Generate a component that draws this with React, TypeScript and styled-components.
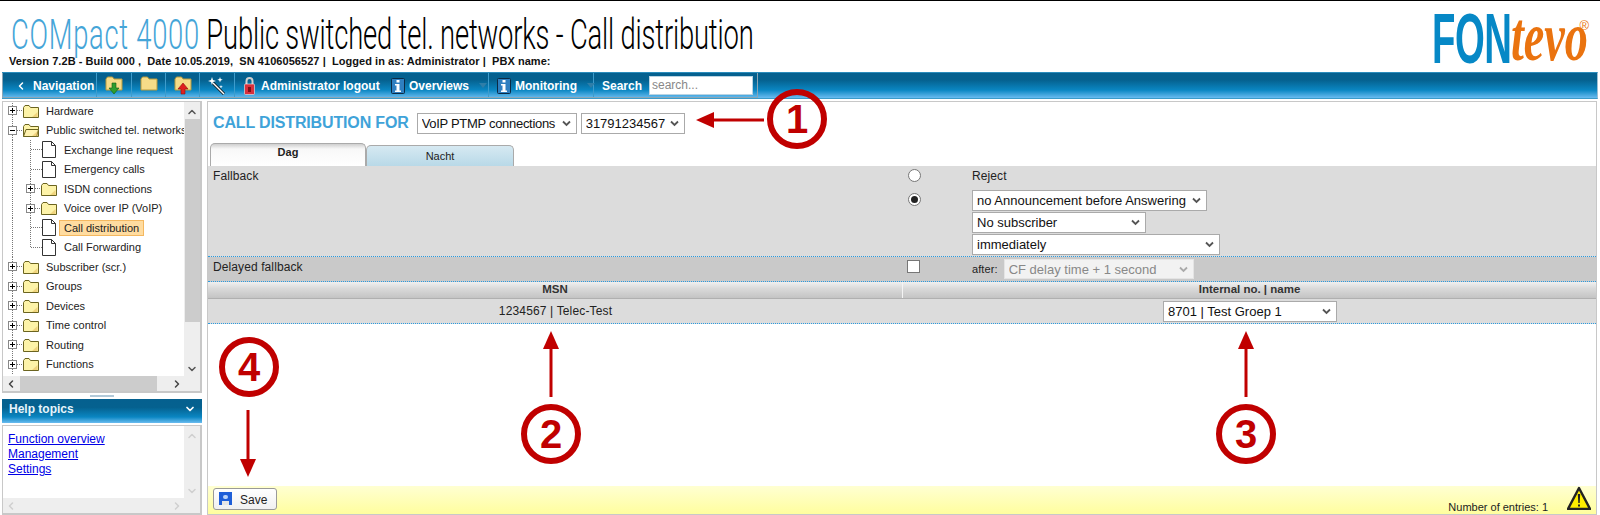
import React from "react";
import styled, { createGlobalStyle } from "styled-components";
import { ChevronUp, ChevronDown, ChevronLeft, ChevronRight } from "lucide-react";

const GlobalStyle = createGlobalStyle`
  html, body {
    margin: 0;
    padding: 0;
    background: #fff;
    font-family: "Liberation Sans", Arial, sans-serif;
  }
`;

const chevron = (color: string) =>
  `url("data:image/svg+xml,%3Csvg xmlns='http://www.w3.org/2000/svg' width='9' height='7'%3E%3Cpath d='M1 1.5l3.5 3.5 3.5-3.5' fill='none' stroke='${color}' stroke-width='1.8'/%3E%3C/svg%3E")`;

const Page = styled.div`
  position: relative;
  width: 1600px;
  height: 515px;
  overflow: hidden;
  border-top: 1px solid #000;
  box-sizing: border-box;
`;

const Header = styled.header`
  display: flex;
  justify-content: space-between;
  height: 71px;
  padding: 0 9px 0 9px;
  box-sizing: border-box;
`;

const TitleBlock = styled.div`
  display: flex;
  flex-direction: column;
`;

const Title = styled.h1`
  margin: 13px 0 0 2px;
  height: 41px;
  font-family: Roboto, "Liberation Sans", sans-serif;
  font-weight: 300;
  font-size: 42px;
  line-height: 41px;
  letter-spacing: -0.26px;
  white-space: pre;
  color: #000;
  transform: scaleX(0.652);
  transform-origin: left center;
`;

const Product = styled.span`
  color: #45a5d8;
  letter-spacing: 1.1px;
`;

const VersionLine = styled.div`
  font-size: 11px;
  line-height: 13px;
  font-weight: bold;
  letter-spacing: 0.05px;
  white-space: pre;
  color: #111;
`;

const Logo = styled.div`
  display: flex;
  position: relative;
  width: 159px;
  height: 60px;
  margin-top: 8px;
`;

const LogoFon = styled.span`
  display: block;
  margin-right: -68px;
  font-size: 71px;
  line-height: 60px;
  font-weight: bold;
  color: #0688c6;
  letter-spacing: -1px;
  transform: scaleX(0.54);
  transform-origin: left center;
`;

const LogoTevo = styled.span`
  display: block;
  margin-right: -36px;
  font-family: "Liberation Serif", serif;
  font-size: 70px;
  line-height: 56px;
  font-style: italic;
  font-weight: bold;
  color: #ea730f;
  transform: scaleX(0.66);
  transform-origin: left center;
`;

const LogoMark = styled.span`
  position: absolute;
  right: 2px;
  top: 10px;
  font-size: 13px;
  line-height: 14px;
  color: #ea730f;
`;

const Toolbar = styled.nav`
  display: flex;
  align-items: stretch;
  height: 27px;
  margin: 0 2px;
  box-sizing: border-box;
  border-top: 1px solid #2a8cbc;
  border-bottom: 1px solid #3b9bca;
  border-right: 1px solid #9cc0d4;
  background: linear-gradient(#05608f 0%, #05618f 28%, #0a86c2 68%, #6abcf0 100%);
`;

const ToolGroup = styled.div`
  display: flex;
  align-items: stretch;
  width: 756px;
  padding-left: 6px;
  box-sizing: border-box;
  border-left: 1px solid #8aa6b6;
  border-right: 1px solid #8aa6b6;
  border-bottom: 1px solid #8aa6b6;
`;

const ToolItem = styled.div<{ $w: number; $pad?: number; $gap?: number; $line?: boolean }>`
  display: flex;
  align-items: center;
  gap: ${(p) => p.$gap ?? 6}px;
  width: ${(p) => p.$w}px;
  padding: 1px 0 0 ${(p) => p.$pad ?? 8}px;
  box-sizing: border-box;
  flex: none;
  color: #fff;
  font-size: 12px;
  font-weight: bold;
  white-space: nowrap;
  border-right: ${(p) => (p.$line ? "1px solid #3d9ccc" : "0")};
  svg {
    flex: none;
  }
`;

const Caret = styled.span`
  width: 0;
  height: 0;
  margin-left: 6px;
  border-left: 4px solid transparent;
  border-right: 4px solid transparent;
  border-top: 5px solid #2f7ea8;
`;

const SearchInput = styled.input`
  align-self: center;
  width: 104px;
  height: 19px;
  padding: 0 2px;
  box-sizing: border-box;
  border: 1px solid #b9d3e2;
  font-family: inherit;
  font-size: 12px;
  &::placeholder {
    color: #888;
  }
`;

const Content = styled.div`
  display: flex;
  gap: 5px;
  height: 414px;
  margin: 2px 3px 0 2px;
`;

const Side = styled.aside`
  display: flex;
  flex-direction: column;
  width: 200px;
  flex: none;
`;

const ScrollPanel = styled.section<{ $h: number }>`
  display: grid;
  grid-template-columns: 1fr 16px;
  grid-template-rows: 1fr 15px;
  height: ${(p) => p.$h}px;
  box-sizing: border-box;
  border: 1px solid #c8c8c8;
  border-right-width: 2px;
  border-bottom-width: 2px;
  background: #fff;
  overflow: hidden;
`;

const VScroll = styled.div<{ $faded?: boolean }>`
  display: flex;
  flex-direction: column;
  align-items: center;
  padding: 4px 0 1px;
  background: #eee;
  color: ${(p) => (p.$faded ? "#cfcfcf" : "#555")};
  svg:last-child {
    margin-top: auto;
  }
`;

const VThumb = styled.div`
  width: 15px;
  height: 203px;
  margin-top: 1px;
  flex: none;
  background: #ccc;
`;

const HScroll = styled.div<{ $faded?: boolean }>`
  grid-column: 1 / 3;
  display: flex;
  align-items: center;
  padding: 0 17px 0 2px;
  background: #eee;
  color: ${(p) => (p.$faded ? "#cfcfcf" : "#444")};
  svg:last-child {
    margin-left: auto;
  }
`;

const HThumb = styled.div`
  width: 137px;
  height: 15px;
  margin-left: 3px;
  background: #ccc;
`;

const TreeBody = styled.div`
  overflow: hidden;
`;

const TreeList = styled.div`
  margin-top: -1px;
`;

const guide = (x: number, half?: boolean) =>
  `repeating-linear-gradient(to bottom, #777 0 1px, transparent 1px 2px) ${x}px 0 / 1px ${half ? "50%" : "100%"} no-repeat`;

const TreeRow = styled.div<{ $level: number; $lastChild?: boolean; $inChild?: boolean }>`
  display: flex;
  align-items: center;
  height: 19.5px;
  padding-left: ${(p) => (p.$level === 0 ? 5 : 23)}px;
  font-size: 11px;
  color: #222;
  white-space: nowrap;
  background: ${(p) =>
    [guide(9), p.$inChild ? guide(27, p.$lastChild) : ""].filter(Boolean).join(", ")};
`;

const Expander = styled.span`
  position: relative;
  flex: none;
  width: 9px;
  height: 9px;
  box-sizing: border-box;
  border: 1px solid #888;
  background: #fff;
  &::before {
    content: "";
    position: absolute;
    left: 1px;
    right: 1px;
    top: 3px;
    height: 1px;
    background: #000;
  }
`;

const ExpanderPlus = styled(Expander)`
  &::after {
    content: "";
    position: absolute;
    top: 1px;
    bottom: 1px;
    left: 3px;
    width: 1px;
    background: #000;
  }
`;

const Dots = styled.span<{ $w: number; $ml?: number }>`
  flex: none;
  width: ${(p) => p.$w}px;
  height: 1px;
  margin-left: ${(p) => p.$ml ?? 0}px;
  background: repeating-linear-gradient(to right, #777 0 1px, transparent 1px 2px);
`;

const NodeLabel = styled.span<{ $selected?: boolean; $gap: number }>`
  margin-left: ${(p) => p.$gap}px;
  padding: ${(p) => (p.$selected ? "1px 4px" : "0")};
  background: ${(p) => (p.$selected ? "#ffdca0" : "transparent")};
  outline: ${(p) => (p.$selected ? "1px solid #f4b860" : "0")};
  position: relative;
  left: ${(p) => (p.$selected ? "-4px" : "0")};
`;

const Splitter = styled.div`
  height: 6px;
  flex: none;
  box-sizing: border-box;
  padding: 2px 88px;
  background: radial-gradient(circle, #b0c8d8 0 0.7px, transparent 1px) 0 0 / 2px 2px;
  background-clip: content-box;
`;

const HelpHeader = styled.div`
  display: flex;
  align-items: center;
  justify-content: space-between;
  height: 24px;
  flex: none;
  padding: 0 6px 4px 7px;
  box-sizing: border-box;
  color: #e6f4fc;
  font-size: 12px;
  font-weight: bold;
  background: linear-gradient(#05608f 0%, #05618f 35%, #0a86c2 75%, #6abcf0 100%);
`;

const HelpLinks = styled.div`
  display: flex;
  flex-direction: column;
  padding: 6px 5px;
  font-size: 12px;
  line-height: 15px;
`;

const HelpLink = styled.a`
  color: #0000e6;
  text-decoration: underline;
`;

const HelpPanel = styled(ScrollPanel)`
  margin-top: 2px;
`;

const Main = styled.main`
  display: flex;
  flex-direction: column;
  width: 1390px;
  flex: none;
  box-sizing: border-box;
  border: 1px solid #c8c8c8;
`;

const TitleRow = styled.div`
  display: flex;
  align-items: center;
  gap: 4px;
  height: 40px;
  padding: 2px 0 0 5px;
  box-sizing: border-box;
`;

const Heading = styled.h2`
  margin: 0 4px 0 0;
  font-size: 16px;
  font-weight: bold;
  letter-spacing: -0.15px;
  color: #3fa3d9;
`;

const Select = styled.select<{ $w: number; $h?: number; $track?: number }>`
  appearance: none;
  width: ${(p) => p.$w}px;
  height: ${(p) => p.$h ?? 21}px;
  padding: 0 0 0 4px;
  box-sizing: border-box;
  border: 1px solid #aaa;
  border-radius: 0;
  font-family: inherit;
  font-size: 13px;
  letter-spacing: ${(p) => p.$track ?? 0}px;
  color: #111;
  background: #fff ${chevron("%23555")} no-repeat right 5px center;
  &:disabled {
    border-color: #e4e4e4;
    color: #888;
    opacity: 1;
    background: #f2f2f2 ${chevron("%23aaa")} no-repeat right 5px center;
  }
`;

const Tabs = styled.div`
  display: flex;
  align-items: flex-end;
  height: 24px;
  padding-left: 2px;
`;

const Tab = styled.div<{ $active?: boolean; $w: number }>`
  width: ${(p) => p.$w}px;
  height: ${(p) => (p.$active ? 23 : 21)}px;
  box-sizing: border-box;
  border: 1px solid #aaa;
  border-bottom: 0;
  border-radius: 5px 5px 0 0;
  text-align: center;
  font-size: 11px;
  line-height: ${(p) => (p.$active ? 16 : 20)}px;
  font-weight: ${(p) => (p.$active ? "bold" : "normal")};
  color: #222;
  background: ${(p) =>
    p.$active
      ? "linear-gradient(#cfcfcf 0, #f8f8f8 5px, #fff 100%)"
      : "linear-gradient(#d6e9f2 0, #b8d9e8 100%)"};
`;

const OptionGrid = styled.div<{ $shade: string }>`
  display: grid;
  grid-template-columns: 695px 69px 1fr;
  background: ${(p) => p.$shade};
  border-bottom: 1px dotted #2a9be0;
  font-size: 12px;
  letter-spacing: 0.1px;
  color: #222;
`;

const OptionLabel = styled.div`
  padding: 3px 0 0 5px;
  line-height: 14px;
`;

const ChoiceColumn = styled.div`
  display: flex;
  flex-direction: column;
  align-items: flex-start;
  padding: 3px 0 0 5px;
  gap: 11px;
  box-sizing: border-box;
`;

const Radio = styled.span<{ $on?: boolean }>`
  position: relative;
  display: block;
  width: 13px;
  height: 13px;
  box-sizing: border-box;
  border: 1px solid #777;
  border-radius: 50%;
  background: #fff;
  &::after {
    content: "";
    display: ${(p) => (p.$on ? "block" : "none")};
    position: absolute;
    inset: 2px;
    border-radius: 50%;
    background: #222;
  }
`;

const Check = styled.span`
  display: block;
  width: 13px;
  height: 13px;
  margin-left: -1px;
  box-sizing: border-box;
  border: 1px solid #777;
  background: #fff;
`;

const FieldColumn = styled.div`
  display: flex;
  flex-direction: column;
  align-items: flex-start;
  gap: 1px;
  padding-bottom: 1px;
  line-height: 14px;
`;

const RejectText = styled.div`
  padding: 3px 0 6px;
`;

const AfterRow = styled.div`
  display: flex;
  align-items: center;
  gap: 6px;
  height: 24px;
  font-size: 11px;
`;

const TableHead = styled.div`
  display: grid;
  grid-template-columns: 695px 1fr;
  height: 17px;
  box-sizing: border-box;
  border-bottom: 1px solid #b0b0b0;
  background: linear-gradient(#f0f0f0 0, #dadada 40%, #c4c4c4 100%);
  font-size: 11.5px;
  font-weight: bold;
  line-height: 15px;
  text-align: center;
  color: #333;
`;

const HeadCell = styled.div<{ $line?: boolean }>`
  border-right: ${(p) => (p.$line ? "1px solid #f4f4f4" : "0")};
`;

const TableRow = styled.div`
  display: grid;
  grid-template-columns: 695px 1fr;
  align-items: center;
  height: 25px;
  box-sizing: border-box;
  background: #dcdcdc;
  border-bottom: 1px dotted #2a9be0;
  font-size: 12px;
  letter-spacing: 0.15px;
  text-align: center;
  color: #222;
`;

const CellSelect = styled(Select)`
  text-align: left;
  margin-left: 260px;
  display: block;
`;

const Spacer = styled.div`
  flex: 1;
`;

const Footer = styled.footer`
  display: flex;
  align-items: flex-start;
  height: 28px;
  padding: 2px 5px 0 5px;
  box-sizing: border-box;
  background: linear-gradient(#ffffd2 0, #fffe9e 100%);
`;

const SaveButton = styled.button`
  display: flex;
  align-items: flex-start;
  gap: 8px;
  width: 64px;
  height: 22px;
  padding: 3px 0 0 5px;
  box-sizing: border-box;
  border: 1px solid #999;
  border-radius: 3px;
  background: linear-gradient(#fff, #f0f0f0);
  font-family: inherit;
  font-size: 12px;
  line-height: 16px;
  color: #222;
`;

const EntryCount = styled.span`
  margin-left: auto;
  margin-top: 13px;
  font-size: 11px;
  line-height: 13px;
  color: #222;
`;

const Warning = styled.svg`
  margin: -2px 0 0 19px;
`;

const Callout = styled.div<{ $x: number; $y: number }>`
  position: absolute;
  left: ${(p) => p.$x - 30}px;
  top: ${(p) => p.$y - 31}px;
  width: 60px;
  height: 60px;
  box-sizing: border-box;
  border: 6px solid #c00000;
  border-radius: 50%;
  font-size: 40px;
  font-weight: bold;
  line-height: 48px;
  text-align: center;
  color: #c00000;
`;

const Arrow = styled.svg<{ $x: number; $y: number }>`
  position: absolute;
  left: ${(p) => p.$x}px;
  top: ${(p) => p.$y}px;
`;

const FolderIcon = ({ open }: { open?: boolean }) => (
  <svg width="16" height="14" viewBox="0 0 16 14" style={{ flex: "none" }}>
    <path d="M.5 3.5L2 1.5h4l1.5 2h8v10H.5z" fill="#fdf3a8" stroke="#6b6420" />
    {open && <path d="M.5 13.5L3 6.5h12.5l-2 7z" fill="#fff2b0" stroke="#6b6420" />}
    <path d="M9 13l5.5-5v5z" fill="#e8c060" opacity=".6" />
  </svg>
);

const DocIcon = () => (
  <svg width="14" height="17" viewBox="0 0 14 17" style={{ flex: "none" }}>
    <path d="M.5.5h9l4 4v12H.5z" fill="#fff" stroke="#333" />
    <path d="M9.5.5v4h4" fill="none" stroke="#333" />
  </svg>
);

const ToolFolder = ({ arrow }: { arrow?: "green" | "red" }) => (
  <svg width="18" height="19" viewBox="0 0 18 19">
    <path d="M1 3l1.5-2h5L9 3h8v11H1z" fill="#f6dc88" stroke="#b89a3c" />
    {arrow === "green" && <path d="M7 7h4v5h3l-5 6-5-6h3z" fill="#2f9e2f" stroke="#125c12" strokeWidth=".6" />}
    {arrow === "red" && <path d="M9 7l5 6h-3v5H7v-5H4z" fill="#e02020" stroke="#8c1010" strokeWidth=".6" />}
  </svg>
);

const WandIcon = () => (
  <svg width="18" height="19" viewBox="0 0 18 19">
    <path d="M5 7l11 11" stroke="#111" strokeWidth="3" />
    <path d="M5 7l11 11" stroke="#fff" strokeWidth="1.4" />
    <path d="M4 1l1 3 3 1-3 1-1 3-1-3-3-1 3-1zM12 1l.7 2 2 .7-2 .7-.7 2-.7-2-2-.7 2-.7zM13 9l.5 1.3 1.3.5-1.3.5-.5 1.3-.5-1.3-1.3-.5 1.3-.5z" fill="#fff" />
  </svg>
);

const LockIcon = () => (
  <svg width="11" height="18" viewBox="0 0 11 18">
    <path d="M2.5 8V4a3 3 0 016 0v4" fill="none" stroke="#d0d0d0" strokeWidth="2" />
    <rect x=".5" y="7" width="10" height="10.5" rx="1" fill="#d8303c" stroke="#eee" strokeWidth=".6" />
    <rect x="4" y="10" width="3" height="5" fill="#7c1018" />
  </svg>
);

const InfoIcon = () => (
  <svg width="14" height="16" viewBox="0 0 14 16">
    <rect x=".5" y=".5" width="13" height="15" rx="1" fill="#2f7fc0" stroke="#0b2a44" />
    <rect x="5.5" y="2" width="3" height="2.5" fill="#fff" />
    <path d="M4 6h4.5v6.5H10V14H4v-1.5h1.5V7.5H4z" fill="#fff" />
  </svg>
);

const SaveIcon = () => (
  <svg width="13" height="13" viewBox="0 0 13 13" style={{ flex: "none" }}>
    <rect width="13" height="13" fill="#1f5fd8" />
    <rect x="4" y="3" width="5" height="4" rx="2" fill="#bcd4f8" />
    <rect x="3" y="9" width="7" height="4" fill="#e6e6e6" />
  </svg>
);

const tree = [
  { label: "Hardware", level: 0, kind: "plus" },
  { label: "Public switched tel. networks", level: 0, kind: "minus" },
  { label: "Exchange line request", level: 1, kind: "doc" },
  { label: "Emergency calls", level: 1, kind: "doc" },
  { label: "ISDN connections", level: 1, kind: "plus" },
  { label: "Voice over IP (VoIP)", level: 1, kind: "plus" },
  { label: "Call distribution", level: 1, kind: "doc", selected: true },
  { label: "Call Forwarding", level: 1, kind: "doc", last: true },
  { label: "Subscriber (scr.)", level: 0, kind: "plus" },
  { label: "Groups", level: 0, kind: "plus" },
  { label: "Devices", level: 0, kind: "plus" },
  { label: "Time control", level: 0, kind: "plus" },
  { label: "Routing", level: 0, kind: "plus" },
  { label: "Functions", level: 0, kind: "plus" },
];

const App = () => (
  <Page>
    <GlobalStyle />
    <Header>
      <TitleBlock>
        <Title>
          <Product>COMpact 4000</Product> Public switched tel. networks - Call distribution
        </Title>
        <VersionLine>
          {"Version 7.2B - Build 000 ,  Date 10.05.2019,  SN 4106056527 |  Logged in as: Administrator |  PBX name:"}
        </VersionLine>
      </TitleBlock>
      <Logo>
        <LogoFon>FON</LogoFon>
        <LogoTevo>tevo</LogoTevo>
        <LogoMark>®</LogoMark>
      </Logo>
    </Header>

    <Toolbar>
      <ToolGroup>
        <ToolItem $w={88} $pad={6} $line>
          <ChevronLeft size={12} strokeWidth={3} />
          <span>Navigation</span>
        </ToolItem>
        <ToolItem $w={35} $line><ToolFolder arrow="green" /></ToolItem>
        <ToolItem $w={34} $line><ToolFolder /></ToolItem>
        <ToolItem $w={34} $line><ToolFolder arrow="red" /></ToolItem>
        <ToolItem $w={35} $line><WandIcon /></ToolItem>
        <ToolItem $w={156} $pad={9}><LockIcon />Administrator logout</ToolItem>
        <ToolItem $w={98} $pad={0} $gap={4} $line><InfoIcon />Overviews<Caret /></ToolItem>
        <ToolItem $w={105} $gap={4} $line><InfoIcon />Monitoring<Caret /></ToolItem>
        <ToolItem $w={55}>Search</ToolItem>
        <SearchInput placeholder="search..." />
      </ToolGroup>
    </Toolbar>

    <Content>
      <Side>
        <ScrollPanel $h={292}>
          <TreeBody>
            <TreeList>
              {tree.map((n) => (
                <TreeRow
                  key={n.label}
                  $level={n.level}
                  $inChild={n.level === 1}
                  $lastChild={n.last}
                >
                  {n.kind === "minus" ? <Expander /> : n.kind === "plus" ? <ExpanderPlus /> : <Dots $w={11} $ml={5} />}
                  {n.kind !== "doc" && <Dots $w={6} />}
                  {n.kind === "doc" ? <DocIcon /> : <FolderIcon open={n.kind === "minus"} />}
                  <NodeLabel $gap={n.kind === "doc" ? 8 : 7} $selected={n.selected}>{n.label}</NodeLabel>
                </TreeRow>
              ))}
            </TreeList>
          </TreeBody>
          <VScroll>
            <ChevronUp size={12} strokeWidth={3} />
            <VThumb />
            <ChevronDown size={12} strokeWidth={3} />
          </VScroll>
          <HScroll>
            <ChevronLeft size={12} strokeWidth={3} />
            <HThumb />
            <ChevronRight size={12} strokeWidth={3} />
          </HScroll>
        </ScrollPanel>
        <Splitter />
        <HelpHeader>
          Help topics
          <ChevronDown size={12} strokeWidth={3.5} color="#fff" />
        </HelpHeader>
        <HelpPanel $h={90}>
          <HelpLinks>
            <HelpLink>Function overview</HelpLink>
            <HelpLink>Management</HelpLink>
            <HelpLink>Settings</HelpLink>
          </HelpLinks>
          <VScroll $faded>
            <ChevronUp size={12} strokeWidth={3} />
            <ChevronDown size={12} strokeWidth={3} />
          </VScroll>
          <HScroll $faded>
            <ChevronLeft size={12} strokeWidth={3} />
            <ChevronRight size={12} strokeWidth={3} />
          </HScroll>
        </HelpPanel>
      </Side>

      <Main>
        <TitleRow>
          <Heading>CALL DISTRIBUTION FOR</Heading>
          <Select $w={160} $track={-0.3} defaultValue="a"><option value="a">VoIP PTMP connections</option></Select>
          <Select $w={104} defaultValue="b"><option value="b">31791234567</option></Select>
        </TitleRow>
        <Tabs>
          <Tab $active $w={156}>Dag</Tab>
          <Tab $w={148}>Nacht</Tab>
        </Tabs>

        <OptionGrid $shade="#dcdcdc">
          <OptionLabel>Fallback</OptionLabel>
          <ChoiceColumn>
            <Radio />
            <Radio $on />
          </ChoiceColumn>
          <FieldColumn>
            <RejectText>Reject</RejectText>
            <Select $w={235} defaultValue="c"><option value="c">no Announcement before Answering</option></Select>
            <Select $w={174} defaultValue="d"><option value="d">No subscriber</option></Select>
            <Select $w={248} defaultValue="e"><option value="e">immediately</option></Select>
          </FieldColumn>
        </OptionGrid>
        <OptionGrid $shade="#c9c9c9">
          <OptionLabel>Delayed fallback</OptionLabel>
          <ChoiceColumn><Check /></ChoiceColumn>
          <AfterRow>
            after:
            <Select $w={190} $h={20} disabled defaultValue="f"><option value="f">CF delay time + 1 second</option></Select>
          </AfterRow>
        </OptionGrid>

        <TableHead>
          <HeadCell $line>MSN</HeadCell>
          <HeadCell>Internal no. | name</HeadCell>
        </TableHead>
        <TableRow>
          <div>1234567 | Telec-Test</div>
          <div>
            <CellSelect $w={174} defaultValue="g"><option value="g">8701 | Test Groep 1</option></CellSelect>
          </div>
        </TableRow>

        <Spacer />
        <Footer>
          <SaveButton><SaveIcon />Save</SaveButton>
          <EntryCount>Number of entries: 1</EntryCount>
          <Warning width="24" height="24" viewBox="0 0 24 24">
            <path d="M12 2L23 23H1z" fill="#ffee00" stroke="#222" strokeWidth="2.4" strokeLinejoin="round" />
            <path d="M10.8 8h2.4l-.5 9h-1.4zM11 18.5h2v2h-2z" fill="#222" />
          </Warning>
        </Footer>
      </Main>
    </Content>

    <Callout $x={797} $y={119}>1</Callout>
    <Arrow $x={696} $y={110} width="68" height="18" viewBox="0 0 68 18">
      <path d="M68 9H16" stroke="#c00000" strokeWidth="3" />
      <path d="M0 9L18 1v16z" fill="#c00000" />
    </Arrow>
    <Arrow $x={542} $y={330} width="18" height="66" viewBox="0 0 18 66">
      <path d="M9 66V16" stroke="#c00000" strokeWidth="3" />
      <path d="M9 0l8 18H1z" fill="#c00000" />
    </Arrow>
    <Callout $x={551} $y={434}>2</Callout>
    <Arrow $x={1237} $y={330} width="18" height="66" viewBox="0 0 18 66">
      <path d="M9 66V16" stroke="#c00000" strokeWidth="3" />
      <path d="M9 0l8 18H1z" fill="#c00000" />
    </Arrow>
    <Callout $x={1246} $y={434}>3</Callout>
    <Callout $x={249} $y={367}>4</Callout>
    <Arrow $x={239} $y={409} width="18" height="67" viewBox="0 0 18 67">
      <path d="M9 0v50" stroke="#c00000" strokeWidth="3" />
      <path d="M9 67L1 49h16z" fill="#c00000" />
    </Arrow>
  </Page>
);

export default App;
